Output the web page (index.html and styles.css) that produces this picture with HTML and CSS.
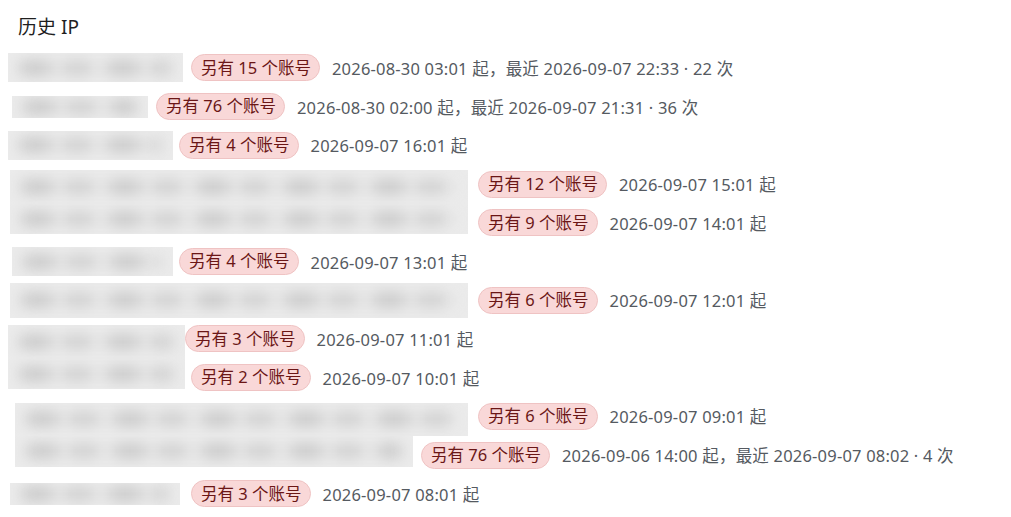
FILE: index.html
```html
<!DOCTYPE html>
<html lang="zh-CN">
<head>
<meta charset="utf-8">
<title>历史 IP</title>
<link rel="stylesheet" href="styles.css">
</head>
<body>
<div class="panel">
  <h3 class="title">历史 IP</h3>
  <ul class="ip-list">
    <li class="row"><span class="ip single" style="margin-left:0px;width:175px" aria-hidden="true"><span class="smudge"></span></span><span class="badge">另有 15 个账号</span><span class="meta">2026-08-30 03:01 起，最近 2026-09-07 22:33 · 22 次</span></li>
    <li class="row"><span class="ip thin" style="margin-left:4px;width:136px" aria-hidden="true"><span class="smudge"></span></span><span class="badge">另有 76 个账号</span><span class="meta">2026-08-30 02:00 起，最近 2026-09-07 21:31 · 36 次</span></li>
    <li class="row"><span class="ip single" style="margin-left:0px;width:165px" aria-hidden="true"><span class="smudge"></span></span><span class="badge tight">另有 4 个账号</span><span class="meta">2026-09-07 16:01 起</span></li>
    <li class="row"><span class="ip top" style="margin-left:2px;width:458px" aria-hidden="true"><span class="smudge"></span></span><span class="badge wide">另有 12 个账号</span><span class="meta">2026-09-07 15:01 起</span></li>
    <li class="row"><span class="ip bottom" style="margin-left:2px;width:458px" aria-hidden="true"><span class="smudge"></span></span><span class="badge wide">另有 9 个账号</span><span class="meta">2026-09-07 14:01 起</span></li>
    <li class="row"><span class="ip single" style="margin-left:4px;width:161px" aria-hidden="true"><span class="smudge"></span></span><span class="badge tight">另有 4 个账号</span><span class="meta">2026-09-07 13:01 起</span></li>
    <li class="row"><span class="ip tall" style="margin-left:2px;width:458px" aria-hidden="true"><span class="smudge"></span></span><span class="badge wide">另有 6 个账号</span><span class="meta">2026-09-07 12:01 起</span></li>
    <li class="row"><span class="ip top" style="margin-left:0px;width:177px" aria-hidden="true"><span class="smudge"></span></span><span class="badge tight-left">另有 3 个账号</span><span class="meta">2026-09-07 11:01 起</span></li>
    <li class="row"><span class="ip bottom" style="margin-left:0px;width:177px" aria-hidden="true"><span class="smudge"></span></span><span class="badge nudge">另有 2 个账号</span><span class="meta">2026-09-07 10:01 起</span></li>
    <li class="row"><span class="ip top" style="margin-left:7px;width:453px" aria-hidden="true"><span class="smudge"></span></span><span class="badge wide">另有 6 个账号</span><span class="meta">2026-09-07 09:01 起</span></li>
    <li class="row"><span class="ip bottom" style="margin-left:7px;width:398px" aria-hidden="true"><span class="smudge"></span></span><span class="badge">另有 76 个账号</span><span class="meta">2026-09-06 14:00 起，最近 2026-09-07 08:02 · 4 次</span></li>
    <li class="row"><span class="ip thin" style="margin-left:2px;width:170px" aria-hidden="true"><span class="smudge"></span></span><span class="badge wide-left">另有 3 个账号</span><span class="meta">2026-09-07 08:01 起</span></li>
  </ul>
</div>
</body>
</html>
```

FILE: styles.css
```css
* {
  box-sizing: border-box;
}

html, body {
  margin: 0;
  padding: 0;
  background: #ffffff;
}

body {
  font-family: "Noto Sans", "Noto Sans CJK SC", sans-serif;
  color: #222;
}

.panel {
  padding: 14px 8px 0 8px;
}

.title {
  margin: 0 0 8.6px 10px;
  font-size: 19px;
  line-height: 26px;
  font-weight: 400;
  color: #1f1f1f;
}

.ip-list {
  list-style: none;
  margin: 0;
  padding: 0;
}

.row {
  display: flex;
  align-items: center;
  height: 38.73px;
  white-space: nowrap;
}

.ip {
  display: flex;
  align-items: center;
  flex: none;
  overflow: hidden;
  background: #ebebeb;
  margin-right: 8px;
}

.ip.single {
  height: 29px;
  align-self: center;
}

.ip.thin {
  height: 22px;
  align-self: center;
}

.ip.tall {
  height: 35px;
  align-self: center;
}

.ip.top {
  align-self: flex-end;
  height: 33px;
}

.ip.bottom {
  align-self: flex-start;
  height: 31px;
}

.smudge {
  display: block;
  flex: 1;
  height: 14px;
  margin: 0 12px;
  background: repeating-linear-gradient(90deg, #c6c6c6 0 30px, #e2e2e2 30px 44px, #cdcdcd 44px 70px, #e4e4e4 70px 88px);
  filter: blur(7px);
  opacity: 0.9;
}

.badge {
  flex: none;
  display: inline-flex;
  align-items: center;
  height: 27px;
  padding: 0 8px 0 9px;
  border: 1px solid #efc3c3;
  border-radius: 14px;
  background: #f9d8d8;
  color: #6b1616;
  font-size: 16.5px;
  line-height: 1;
}

.badge.tight {
  margin-left: -2px;
}

.badge.wide {
  margin-left: 2px;
}

.badge.tight-left {
  margin-left: -8px;
}

.badge.nudge {
  margin-left: -2px;
}

.badge.wide-left {
  margin-left: 3px;
}

.meta {
  margin-left: 12px;
  font-size: 16.5px;
  letter-spacing: 0.2px;
  color: #555a61;
}
```
